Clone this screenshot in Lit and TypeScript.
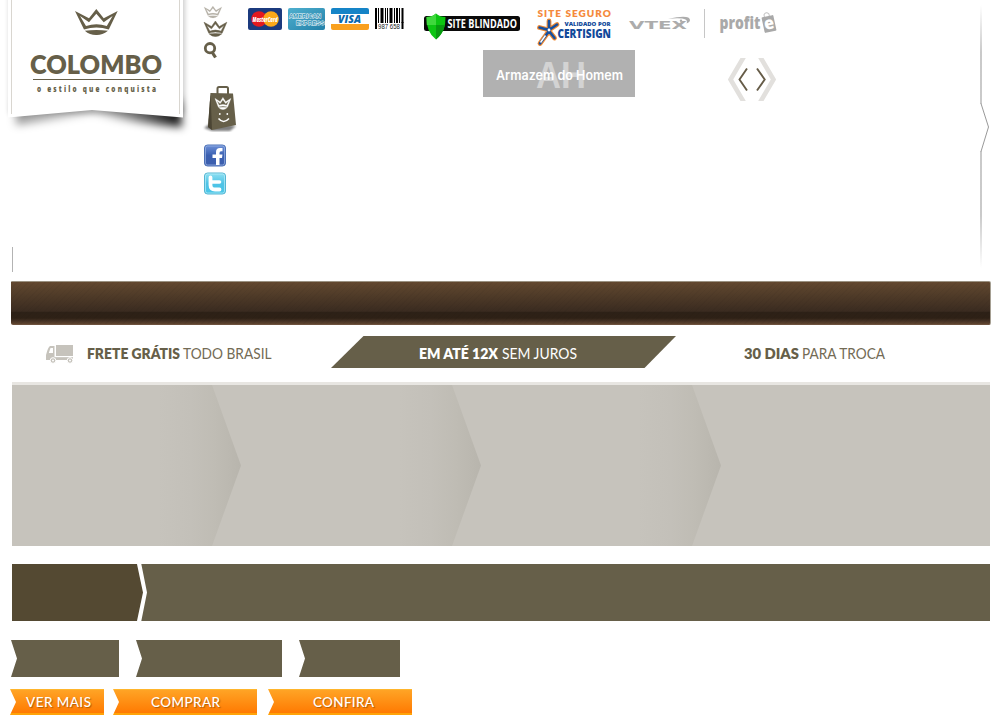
import { LitElement, html, svg, css } from "lit";
import { customElement } from "lit/decorators.js";

const crown = (x: number, y: number, w: number, h: number, c: string, extra = 0) => svg`
  <g transform="translate(${x} ${y}) scale(${w / 43} ${h / 26})" fill=${c} stroke=${c} stroke-width=${extra}>
    <path fill-rule="evenodd" d="M0 2 L14 9.300 L21.300 0 L28.700 9.300 L42.700 2 L33.800 20.600 Q21.400 16.200 9 20.600 Z
      M5 7 L11 17 Q21.400 13.400 31.800 17 L37.600 7 L28.700 13.200 L21.300 4.800 L14 13.200 Z" />
    <path d="M9.800 21.700 Q21.500 20.300 33 21.700 Q27 26.200 21.500 26 Q15 26.200 9.800 21.700Z" />
  </g>`;

const label = (x: number, y: number, size: number, len: number, cls: string, text: string) => svg`
  <text x=${x} y=${y} font-size=${size} textLength=${len} lengthAdjust="spacingAndGlyphs" class=${cls}>${text}</text>`;

const spaced = (x: number, y: number, size: number, len: number, cls: string, text: string) => svg`
  <text x=${x} y=${y} font-size=${size} textLength=${len} lengthAdjust="spacing" class=${cls}>${text}</text>`;

const bars = [
  [375, 2], [378, 1], [380.5, 3], [385, 1], [387, 1], [389.5, 3], [394, 1], [396, 2], [399, 1], [401.5, 2],
];

@customElement("app-root")
export class AppRoot extends LitElement {
  static styles = css`
    :host { display: block; width: 999px; height: 726px; overflow: hidden; background: #fff; font-family: Lato, "Open Sans", sans-serif; }
    svg { display: block; flex: none; overflow: visible; }
    .top { display: flex; height: 281px; }
    .brand { width: 204px; flex: none; }
    .tick { width: 1px; height: 25px; margin: 107px 0 0 12px; background: #b3b3b3; }
    .tools { width: 44px; flex: none; }
    .main { width: 731px; flex: none; }
    .row { display: flex; }
    .pay { gap: 6px; }
    .seals { margin-left: 20px; gap: 16px; }
    .credits { margin-left: 18px; gap: 14px; }
    .store { margin-left: 235px; }
    .arrows { margin: 8px 0 0 93px; overflow: hidden; }
    .menu { height: 42px; margin: 0 8px 0 11px; width: 979px; border-top: 1px solid #9b9282; border-right: 1px solid #a59f92; border-radius: 1px 2px 2px 2px; border-bottom: 1px solid #6d513d;
      background: repeating-linear-gradient(135deg, rgba(0,0,0,.03) 0 1px, transparent 1px 4px), linear-gradient(#634830 0, #56402b 20%, #3a2b20 70%, #2d2117 71%, #2e2116 86%, #4d3728 95%, #60452f 100%); }
    .info { height: 57px; display: flex; }
    .steps { margin-left: 12px; width: 978px; height: 161px; border-top: 3px solid #e8e6e2; background: #c6c3bc; display: flex; }
    .step { width: 229px; margin-right: 11px; height: 161px; clip-path: polygon(0 0, 200px 0, 229px 50%, 200px 100%, 0 100%);
      background: linear-gradient(90deg, #c6c3bc 64%, #c3c0b9 78%, #bfbcb4 89%, #b8b5ad 100%); }
    .band { margin: 18px 0 0 12px; width: 978px; height: 57px; display: flex; background: #665f49; }
    .ribbons { display: flex; margin: 19px 0 0 11px; gap: 17px; height: 37px; }
    .ribbon { background: #665f49; clip-path: polygon(0 0, 100% 0, 100% 100%, 0 100%, 6px 50%); }
    .r1 { width: 108px; } .r2 { width: 146px; } .r3 { width: 101px; }
    .buttons { display: flex; margin: 12px 0 0 10px; height: 26px; }
    .button { box-sizing: border-box; height: 26px; border-top: 1px solid #ffb52c; border-bottom: 2px solid #ffa308;
      background: linear-gradient(#ffa425, #ff7a02); clip-path: polygon(0 0, 100% 0, 100% 100%, 0 100%, 6px 50%); }
    .b1 { width: 94px; margin-right: 9px; } .b2 { width: 144px; margin-right: 11px; } .b3 { width: 144px; }
    .cap { fill: #fff; font-weight: 500; text-shadow: 1px 1px 1px rgba(100,50,0,.5); }
    .name { fill: #665f49; font-weight: 800; }
    .motto { fill: #665f49; font-family: "Open Sans", sans-serif; font-weight: 800; }
    .b { fill: #665f49; font-weight: 800; }
    .l { fill: #736b55; font-weight: 400; }
    .wb { fill: #fff; font-weight: 800; }
    .wl { fill: #fff; font-weight: 400; }
    .card { fill: #fff; font-family: "Open Sans", sans-serif; font-weight: 800; font-style: italic; }
    .amex { fill: #2a8fb5; stroke: #fff; stroke-width: .8; paint-order: stroke; font-family: "Liberation Sans", sans-serif; font-weight: 700; }
    .visa { fill: #0869ae; font-family: "Open Sans", sans-serif; font-weight: 800; font-style: italic; }
    .digits { fill: #222; font-family: "Liberation Sans", sans-serif; }
    .shield { fill: #fff; font-family: "Open Sans", sans-serif; font-weight: 700; }
    .safe { fill: #f58a3c; font-weight: 800; }
    .cert { fill: #12499a; font-family: "Open Sans", sans-serif; font-weight: 800; }
    .ah { fill: #d3d3d3; font-family: "Liberation Sans", sans-serif; font-weight: 700; }
    .arm { fill: #fff; font-family: Inter, sans-serif; font-weight: 600; }
    .vtex { fill: #acacac; font-family: "DejaVu Sans", sans-serif; font-weight: 700; }
    .profit { fill: #a9a9a9; font-family: "Open Sans", sans-serif; font-weight: 800; }
    .e { fill: #fff; font-family: "Open Sans", sans-serif; font-weight: 800; }
  `;

  private logo() {
    return html`<svg width="204" height="140" viewBox="0 0 204 140">
      <defs>
        <filter id="soft" x="-20%" y="-80%" width="140%" height="260%"><feGaussianBlur stdDeviation="4.500" /></filter>
        <filter id="soft2" x="-50%" y="-20%" width="200%" height="140%"><feGaussianBlur stdDeviation="2.500" /></filter>
        <linearGradient id="sh"><stop stop-color="#000" stop-opacity=".4" /><stop offset=".5" stop-color="#000" stop-opacity=".2" /><stop offset="1" stop-color="#000" stop-opacity=".95" /></linearGradient>
      </defs>
      <path d="M16 100 H180 L182 127 Q140 124 92 113 Q50 120 16 125Z" fill="url(#sh)" filter="url(#soft)" />
      <path d="M9 -9 H185 V114 H9Z" fill="#000" opacity=".2" filter="url(#soft2)" />
      <path d="M8 0 H183 V117.500 L92 110 L8 117.500Z" fill="#fff" />
      <path d="M11.500 0 V114 M179.500 0 V114" stroke="#d9d6d0" />
      ${crown(75, 9, 43, 26, "#665f49")}
      ${label(30, 74, 26.5, 132, "name", "COLOMBO")}
      <path d="M33 79.500 H160" stroke="#665f49" />
      <g transform="translate(37 0) scale(.7 1)">${spaced(0, 92, 9.2, 170, "motto", "o estilo que conquista")}</g>
    </svg>`;
  }

  private tools() {
    return html`<svg width="44" height="200" viewBox="204 0 44 200">
      <defs>
        <linearGradient id="fb" x2="0" y2="1"><stop stop-color="#6d90d8" /><stop offset=".5" stop-color="#3a5fb0" /><stop offset="1" stop-color="#3d5fae" /></linearGradient>
        <linearGradient id="tw" x2="0" y2="1"><stop stop-color="#8fe0f2" /><stop offset=".5" stop-color="#4fc3e6" /><stop offset="1" stop-color="#49c6e8" /></linearGradient>
        <filter id="bs"><feGaussianBlur stdDeviation="1" /></filter>
      </defs>
      ${crown(204, 6, 18, 12, "#b5b1a7", 0.3)}
      ${crown(204, 21, 23, 15.5, "#665f49", 0.9)}
      <circle cx="210" cy="48.200" r="4.700" fill="none" stroke="#665f49" stroke-width="2.800" />
      <path d="M212 52 L215.500 57.500" stroke="#665f49" stroke-width="3.200" />
      <path d="M204 128 L212 122 L236 126 L230 131 L212 131Z" fill="#000" opacity=".5" filter="url(#bs)" />
      <path d="M217.500 95 V88.500 Q217.500 87 219 87 H226.500 Q228 87 228 88.500 V95" fill="none" stroke="#665f49" stroke-width="2" />
      <path d="M210.500 93 L233 93.500 L236 125 L212 130 L208 127 Z" fill="#665f49" />
      <path d="M210.500 93 L212 130 L208 127Z" fill="#4b4534" />
      ${crown(215, 97.5, 16, 12, "#fff", 0.9)}
      <circle cx="219.800" cy="114" r=".9" fill="#fff" /><circle cx="227.300" cy="114" r=".9" fill="#fff" />
      <path d="M218.500 118.500 Q223.500 124.500 229 118.500" fill="none" stroke="#fff" stroke-width="1.500" />
      <rect x="204.500" y="145" width="21" height="21" rx="3" fill="url(#fb)" stroke="#4c70b5" />
      <rect x="205.500" y="146" width="19" height="19" rx="2" fill="none" stroke="#9db7e7" stroke-width=".7" />
      <path d="M216 165 V158 H212.500 V154.500 H216 V152 Q216 148 220 148 H222.500 V151.300 H221 Q219.500 151.300 219.500 153 V154.500 H222.500 L222 158 H219.500 V165Z" fill="#fff" />
      <rect x="204.500" y="173" width="21" height="21" rx="3" fill="url(#tw)" stroke="#56b5d2" />
      <rect x="205.500" y="174" width="19" height="19" rx="2" fill="none" stroke="#b9eef8" stroke-width=".7" />
      <path d="M210.500 177.500 V185 Q210.500 189.500 215 189.500 H219.500" fill="none" stroke="#fff" stroke-width="3.800" stroke-linecap="round" />
      <path d="M211 182 H219.500" fill="none" stroke="#fff" stroke-width="3.600" stroke-linecap="round" />
    </svg>`;
  }

  private payments() {
    return html`<div class="row pay">
      <svg width="34" height="50" viewBox="248 0 34 50">
        <rect x="248" y="8" width="34" height="22" rx="2" fill="#1b3a7e" />
        <circle cx="259" cy="19" r="7.800" fill="#e3191f" /><circle cx="271" cy="19" r="7.800" fill="#fba819" />
        ${label(252.5, 21.5, 6.5, 25, "card", "MasterCard")}
      </svg>
      <svg width="37" height="50" viewBox="288 0 37 50">
        <defs><linearGradient id="ax" x2="1" y2="1"><stop stop-color="#4fb0cf" /><stop offset="1" stop-color="#2380a9" /></linearGradient></defs>
        <rect x="288" y="8" width="37" height="22" rx="2" fill="url(#ax)" />
        ${label(289, 17.5, 6, 32, "amex", "AMERICAN")}
        ${label(296, 25, 6, 28.5, "amex", "EXPRESS")}
      </svg>
      <svg width="38" height="50" viewBox="331 0 38 50">
        <rect x="331" y="8" width="38" height="22" rx="2" fill="#fff" />
        <path d="M331 14 V10 Q331 8 333 8 H367 Q369 8 369 10 V14Z" fill="#1584c7" />
        <path d="M331 24 H369 V28 Q369 30 367 30 H333 Q331 30 331 28Z" fill="#f9a01e" />
        ${label(338, 23, 10.5, 23, "visa", "VISA")}
      </svg>
      <svg width="29" height="50" viewBox="375 0 29 50">
        ${bars.map(([x, w]) => svg`<rect x=${x} y="8" width=${w} height="15" fill="#000" />`)}
        <rect x="375" y="22" width="2" height="7" /><rect x="401.500" y="22" width="2" height="7" />
        ${label(378, 29, 6.5, 22, "digits", "987 658")}
      </svg>
    </div>`;
  }

  private seals() {
    return html`<div class="row seals">
      <svg width="96" height="50" viewBox="424 0 96 50">
        <rect x="424" y="16" width="96" height="15" rx="2.500" fill="#0a0a0a" />
        <path d="M436 13.500 Q440 17 445.500 17 Q446 32 436 39.500 Q426 32 426.500 17 Q432 17 436 13.500Z" fill="#0cc512" />
        <path d="M436 13.500 Q432 17 426.500 17 L426.800 25 H436Z" fill="#3fd83d" />
        <path d="M436 25 H445 Q443 34 436 39.500Z" fill="#089a10" />
        ${label(447.5, 28.2, 12.5, 69.5, "shield", "SITE BLINDADO")}
      </svg>
      <svg width="75" height="50" viewBox="536 0 75 50">
        ${spaced(537.5, 17.3, 10, 73.5, "safe", "SITE SEGURO")}
        <g fill="none" stroke="#f28a32" stroke-width="4.800" stroke-linecap="round">
          <path d="M549 30 V21 M549 30 L557 24.500 M549 30 L539.500 27.500 M549 31 L540 43.500 M549 31 L554.500 38" />
        </g>
        <g fill="none" stroke="#164f9f" stroke-width="2.600" stroke-linecap="round">
          <path d="M549 30 V21 M549 30 L557 24.500 M549 30 L539.500 27.500 M549 31 L540 43.500 M549 31 L554.500 38" />
        </g>
        <path d="M545.500 35.500 L540.500 42.500" stroke="#fff" stroke-width="1.500" />
        <circle cx="549" cy="30" r="1.400" fill="#fff" />
        ${label(564.5, 26.3, 5.5, 46, "cert", "VALIDADO POR")}
        ${label(557.5, 38.2, 12, 53.5, "cert", "CERTISIGN")}
      </svg>
    </div>`;
  }

  private credits() {
    return html`<div class="row credits">
      <svg width="61" height="50" viewBox="629 0 61 50">
        ${label(629, 28.5, 10, 58, "vtex", "VTEX")}
        <path d="M668 18.700 Q690 14 690 20 Q690 22 686.500 23.500 Q690 16.500 668 18.700Z" fill="#acacac" />
        <circle cx="681" cy="20.800" r="1.200" fill="#acacac" />
      </svg>
      <svg width="1" height="50" viewBox="704 0 1 50"><path d="M704.500 9 V38" stroke="#c6c6c6" /></svg>
      <svg width="58" height="50" viewBox="719 0 58 50">
        ${label(719.5, 29, 18, 41, "profit", "profit")}
        <g transform="rotate(-12 769 24)">
          <path d="M766 17 V14 Q768.500 11 771 14 V17" fill="none" stroke="#c4c4c4" />
          <rect x="763" y="16" width="12" height="16" rx="1" fill="#a9a9a9" />
          ${label(764, 29, 17, 10, "e", "e")}
        </g>
      </svg>
    </div>`;
  }

  render() {
    return html`
      <div class="top">
        <div class="brand">${this.logo()}<div class="tick"></div></div>
        <div class="tools">${this.tools()}</div>
        <div class="main">
          <div class="row">${this.payments()}${this.seals()}${this.credits()}</div>
          <div class="row">
            <svg class="store" width="152" height="47" viewBox="483 50 152 47">
              <rect x="483" y="50" width="152" height="47" fill="#b1b1b1" />
              ${label(536, 88, 37, 50, "ah", "AH")}
              ${label(496, 80, 13, 127, "arm", "Armazem do Homem")}
            </svg>
            <svg class="arrows" width="48" height="43" viewBox="728 58 48 43" fill="none">
              <path d="M745.500 54 L730.500 79.500 L745.500 105 M758.500 54 L773.500 79.500 L758.500 105" stroke="#e2e0dd" stroke-width="4.600" />
              <path d="M747 68.500 L739.500 79.500 L747 90.500 M757 68.500 L764.700 79.500 L757 90.500" stroke="#665c48" stroke-width="1.900" />
            </svg>
          </div>
        </div>
        <svg width="12" height="272" viewBox="979 0 12 272" fill="none">
          <defs><linearGradient id="fade" gradientUnits="userSpaceOnUse" x1="0" y1="5" x2="0" y2="268">
            <stop stop-color="#b8b8b8" stop-opacity="0" /><stop offset=".18" stop-color="#b8b8b8" /><stop offset=".8" stop-color="#b8b8b8" /><stop offset="1" stop-color="#b8b8b8" stop-opacity="0" />
          </linearGradient></defs>
          <path d="M981 5 V104 M981 151 V268" stroke="url(#fade)" stroke-width="1.500" />
          <path d="M981 103.500 L988.500 127 L981 151.500" stroke="#999" />
        </svg>
      </div>
      <div class="menu"></div>
      <div class="info">
        <svg width="331" height="57" viewBox="0 325 331 57">
          <g fill="#c6c3bc">
            <path d="M56 345 H73 V356 H56Z" />
            <path d="M50 346 H54.500 V357 H73 V360 H46 V355 Q48 347 50 346Z" />
            <path d="M50.500 348 H53 V353 H48.800Z" fill="#fff" />
            <path d="M55 356.700 H73" stroke="#fff" stroke-width=".8" />
            <g stroke="#fff"><circle cx="53" cy="360.500" r="2.800" /><circle cx="70" cy="360.500" r="2.800" /></g>
            <g fill="#fff"><circle cx="53" cy="360.500" r="1" /><circle cx="70" cy="360.500" r="1" /></g>
          </g>
          ${label(87, 359, 15, 93, "b", "FRETE GRÁTIS")}
          ${label(183, 359, 15, 88.5, "l", "TODO BRASIL")}
        </svg>
        <svg width="345" height="57" viewBox="331 325 345 57">
          <path d="M363.500 336 H676 L644.500 368 H331Z" fill="#665f49" />
          ${label(419, 359, 15, 79, "wb", "EM ATÉ 12X")}
          ${label(502, 359, 15, 75, "wl", "SEM JUROS")}
        </svg>
        <svg width="323" height="57" viewBox="676 325 323 57">
          ${label(744, 359, 15, 55, "b", "30 DIAS")}
          ${label(802, 359, 15, 83, "l", "PARA TROCA")}
        </svg>
      </div>
      <div class="steps"><div class="step"></div><div class="step"></div><div class="step"></div></div>
      <div class="band">
        <svg width="136" height="57" viewBox="0 0 136 57">
          <path d="M0 0 H125 L131 28.500 L125 57 H0Z" fill="#544932" />
          <path d="M125 0 H129.300 L135 28.500 L129.300 57 H125 L131 28.500Z" fill="#fff" />
        </svg>
      </div>
      <div class="ribbons"><div class="ribbon r1"></div><div class="ribbon r2"></div><div class="ribbon r3"></div></div>
      <div class="buttons">
        <div class="button b1"><svg width="94" height="24" viewBox="0 1 94 24">${spaced(16, 18, 13.5, 65, "cap", "VER MAIS")}</svg></div>
        <div class="button b2"><svg width="144" height="24" viewBox="0 1 144 24">${spaced(38, 18, 13.5, 69, "cap", "COMPRAR")}</svg></div>
        <div class="button b3"><svg width="144" height="24" viewBox="0 1 144 24">${spaced(45, 18, 13.5, 61, "cap", "CONFIRA")}</svg></div>
      </div>`;
  }
}
